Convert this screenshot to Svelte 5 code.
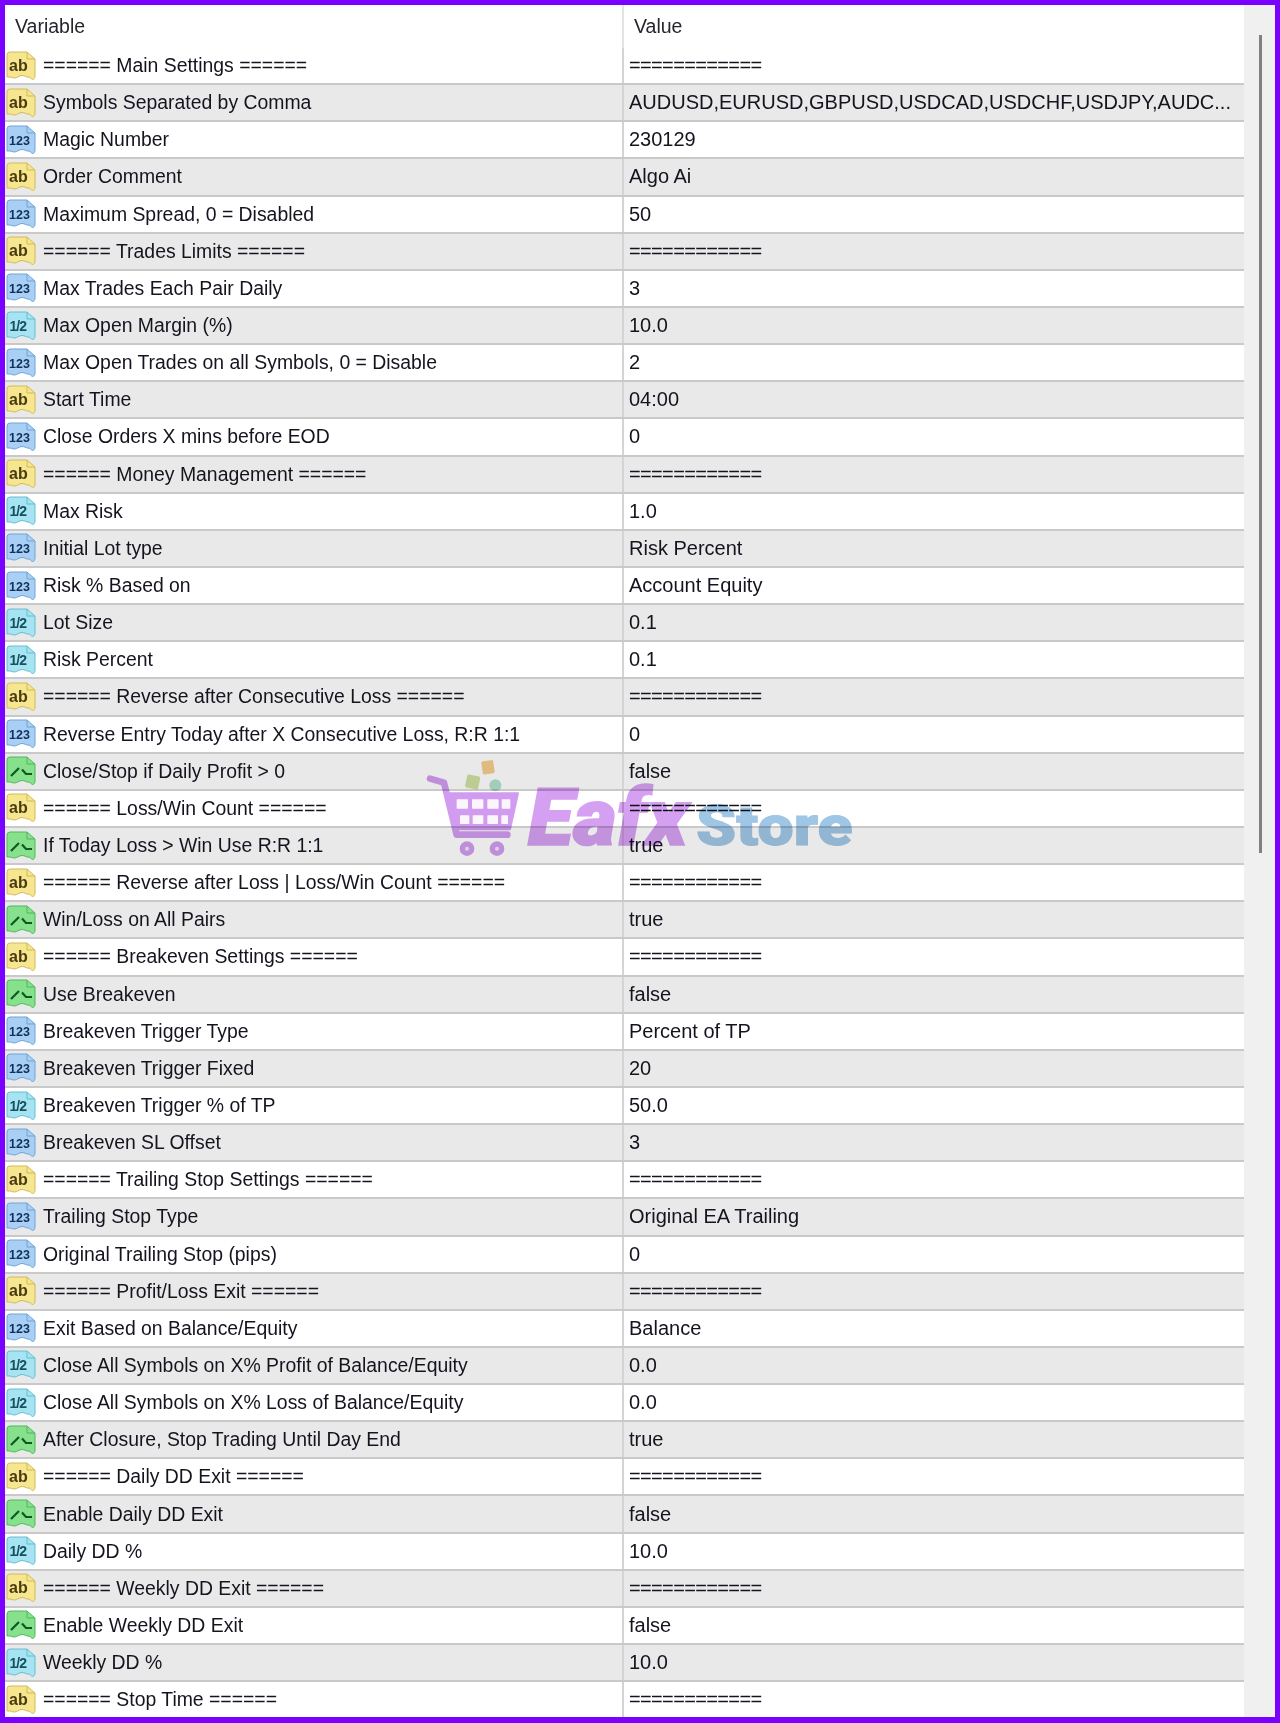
<script>
  const sep = '============';
  const rows = [
    ['ab','====== Main Settings ======',sep],
    ['ab','Symbols Separated by Comma','AUDUSD,EURUSD,GBPUSD,USDCAD,USDCHF,USDJPY,AUDC...'],
    ['n','Magic Number','230129'],
    ['ab','Order Comment','Algo Ai'],
    ['n','Maximum Spread, 0 = Disabled','50'],
    ['ab','====== Trades Limits ======',sep],
    ['n','Max Trades Each Pair Daily','3'],
    ['h','Max Open Margin (%)','10.0'],
    ['n','Max Open Trades on all Symbols, 0 = Disable','2'],
    ['ab','Start Time','04:00'],
    ['n','Close Orders X mins before EOD','0'],
    ['ab','====== Money Management ======',sep],
    ['h','Max Risk','1.0'],
    ['n','Initial Lot type','Risk Percent'],
    ['n','Risk % Based on','Account Equity'],
    ['h','Lot Size','0.1'],
    ['h','Risk Percent','0.1'],
    ['ab','====== Reverse after Consecutive Loss ======',sep],
    ['n','Reverse Entry Today after X Consecutive Loss, R:R 1:1','0'],
    ['b','Close/Stop if Daily Profit > 0','false'],
    ['ab','====== Loss/Win Count ======',sep],
    ['b','If Today Loss > Win Use R:R 1:1','true'],
    ['ab','====== Reverse after Loss | Loss/Win Count ======',sep],
    ['b','Win/Loss on All Pairs','true'],
    ['ab','====== Breakeven Settings ======',sep],
    ['b','Use Breakeven','false'],
    ['n','Breakeven Trigger Type','Percent of TP'],
    ['n','Breakeven Trigger Fixed','20'],
    ['h','Breakeven Trigger % of TP','50.0'],
    ['n','Breakeven SL Offset','3'],
    ['ab','====== Trailing Stop Settings ======',sep],
    ['n','Trailing Stop Type','Original EA Trailing'],
    ['n','Original Trailing Stop (pips)','0'],
    ['ab','====== Profit/Loss Exit ======',sep],
    ['n','Exit Based on Balance/Equity','Balance'],
    ['h','Close All Symbols on X% Profit of Balance/Equity','0.0'],
    ['h','Close All Symbols on X% Loss of Balance/Equity','0.0'],
    ['b','After Closure, Stop Trading Until Day End','true'],
    ['ab','====== Daily DD Exit ======',sep],
    ['b','Enable Daily DD Exit','false'],
    ['h','Daily DD %','10.0'],
    ['ab','====== Weekly DD Exit ======',sep],
    ['b','Enable Weekly DD Exit','false'],
    ['h','Weekly DD %','10.0'],
    ['ab','====== Stop Time ======',sep]
  ];
</script>

{#snippet icon(kind)}
  <svg class="icon {kind}" viewBox="0 0 30 30" aria-hidden="true">
    <path class="sheet" d="M4 1H21L29 8V25c0 2.500-1.500 3.500-2.500 3.500s-2-2.500-4.500-2.500-3-1.500-6-1.500-5 2.500-7.500 2.500S5 25.500 1 26V4Q1 1 4 1Z"/>
    <path class="fold" d="M21 1V8H29"/>
    {#if kind === 'ab'}
      <text class="glyph" x="3" y="20" font-size="16" font-weight="700">ab</text>
    {:else if kind === 'n'}
      <text class="glyph" x="3" y="20" font-size="12.500" font-weight="700">123</text>
    {:else if kind === 'h'}
      <text class="glyph" x="3.500" y="19.500" font-size="14" font-weight="700" letter-spacing="-1">1/2</text>
    {:else}
      <path class="line" d="M5 20L13 12M16 13.500L20 18H26"/>
    {/if}
  </svg>
{/snippet}

<div class="frame">
  <div class="table">
    <div class="head">
      <div class="hname">Variable</div>
      <div class="hval">Value</div>
    </div>
    <div class="list">
      {#each rows as r, i}
        <div class="row" class:alt={i % 2 === 1}>
          <div class="name">
            {@render icon(r[0])}
            <span>{r[1]}</span>
          </div>
          <div class="val" class:rule={r[2] === sep}>{r[2]}</div>
        </div>
      {/each}
    </div>
  </div>
  <div class="scroll"><div class="thumb"></div></div>

  <svg class="mark" viewBox="0 0 1440 390" aria-label="Eafx Store">
    <rect x="246" y="62" width="36" height="40" rx="5" fill="#f6cd8c" transform="rotate(-8 264 82)"/>
    <rect x="198" y="106" width="40" height="40" rx="5" fill="#cfe0a0" transform="rotate(12 218 126)"/>
    <circle cx="286" cy="136" r="18" fill="#b4e0cc"/>
    <path d="M90 116L132 128L170 284H322" fill="none" stroke="#d19cf0" stroke-width="20" stroke-linecap="round" stroke-linejoin="round"/>
    <path d="M146 160H354L330 268H172Z" fill="#d19cf0" stroke="#d19cf0" stroke-width="6" stroke-linejoin="round"/>
    <g fill="#fbf6fe">
      <rect x="170" y="178" width="34" height="28" rx="2"/>
      <rect x="216" y="178" width="34" height="28" rx="2"/>
      <rect x="262" y="178" width="34" height="28" rx="2"/>
      <rect x="305" y="178" width="26" height="28" rx="2"/>
      <rect x="180" y="226" width="28" height="26" rx="2"/>
      <rect x="218" y="226" width="32" height="26" rx="2"/>
      <rect x="262" y="226" width="32" height="26" rx="2"/>
      <rect x="304" y="226" width="20" height="26" rx="2"/>
    </g>
    <circle cx="201" cy="326" r="22" fill="#d19cf0"/>
    <circle cx="291" cy="326" r="22" fill="#d19cf0"/>
    <circle cx="201" cy="326" r="6" fill="#f3e4fb"/>
    <circle cx="291" cy="326" r="6" fill="#f3e4fb"/>
    <text class="eafx" x="384" y="315" textLength="480" lengthAdjust="spacingAndGlyphs">Eafx</text>
    <text class="store" x="888" y="315" textLength="470" lengthAdjust="spacingAndGlyphs">Store</text>
  </svg>
</div>

<style>
  :global(body) { margin: 0; background: #fff; }
  .frame {
    position: relative;
    box-sizing: border-box;
    width: 1280px;
    height: 1723px;
    border: solid #7a00ff;
    border-width: 5px 5px 6px 5px;
    display: flex;
    background: #f0f0f0;
    font-family: "Liberation Sans", Arial, sans-serif;
    font-size: 19.400px;
    color: #14141f;
    overflow: hidden;
  }
  .table {
    width: 1239px;
    display: flex;
    flex-direction: column;
    background: #fff;
    filter: blur(0.45px);
  }
  .head {
    height: 43px;
    flex: none;
    display: grid;
    grid-template-columns: 617px 1fr;
    align-items: center;
    color: #26262e;
    font-size: 19.500px;
  }
  .hname { padding-left: 10px; }
  .hval {
    height: 100%;
    display: flex;
    align-items: center;
    border-left: 2px solid #e4e4e4;
    padding-left: 10px;
  }
  .list { flex: 1; display: flex; flex-direction: column; }
  .row {
    flex: 1;
    min-height: 0;
    display: grid;
    grid-template-columns: 617px 1fr;
    border-bottom: 2px solid #c9c9c9;
    box-sizing: border-box;
  }
  .row:last-child { border-bottom: 0; }
  .row.alt { background: #e9e9e9; }
  .name {
    display: flex;
    align-items: center;
    gap: 7px;
    padding-left: 1px;
    white-space: nowrap;
  }
  .val {
    border-left: 2px solid #d4d4d4;
    padding-left: 5px;
    display: flex;
    align-items: center;
    white-space: nowrap;
    font-size: 20px;
  }
  .val.rule { letter-spacing: -0.640px; }
  .icon { width: 30px; height: 30px; flex: none; }
  .sheet { stroke-width: 1; }
  .fold { fill: none; stroke-width: 1; }
  .glyph { font-family: "Liberation Sans", Arial, sans-serif; }
  .line { fill: none; stroke: #0e5a22; stroke-width: 2.200; }
  .ab .sheet { fill: #f6e690; stroke: #d2bb56; }
  .ab .fold { stroke: #d2bb56; }
  .ab .glyph { fill: #4a3a10; }
  .n .sheet { fill: #a9d0f4; stroke: #6ea4da; }
  .n .fold { stroke: #6ea4da; }
  .n .glyph { fill: #12305c; }
  .h .sheet { fill: #a6e4f2; stroke: #64bed2; }
  .h .fold { stroke: #64bed2; }
  .h .glyph { fill: #17505e; }
  .b .sheet { fill: #86e08c; stroke: #4fba5c; }
  .b .fold { stroke: #4fba5c; }
  .scroll { flex: 1; min-width: 0; }
  .thumb {
    width: 3px;
    height: 818px;
    margin: 30px 0 0 15px;
    background: #808080;
  }
  .mark {
    position: absolute;
    left: 395px;
    top: 735px;
    width: 480px;
    height: 130px;
    mix-blend-mode: multiply;
    filter: blur(0.6px);
  }
  .eafx {
    font-family: Roboto, "Liberation Sans", sans-serif;
    font-weight: 900;
    font-style: italic;
    font-size: 240px;
    fill: #d6a0f2;
    stroke: #d6a0f2;
    stroke-width: 5px;
  }
  .store {
    font-family: Roboto, "Liberation Sans", sans-serif;
    font-weight: 900;
    font-size: 165px;
    fill: #a0c6e6;
    stroke: #a0c6e6;
    stroke-width: 3px;
  }
</style>
